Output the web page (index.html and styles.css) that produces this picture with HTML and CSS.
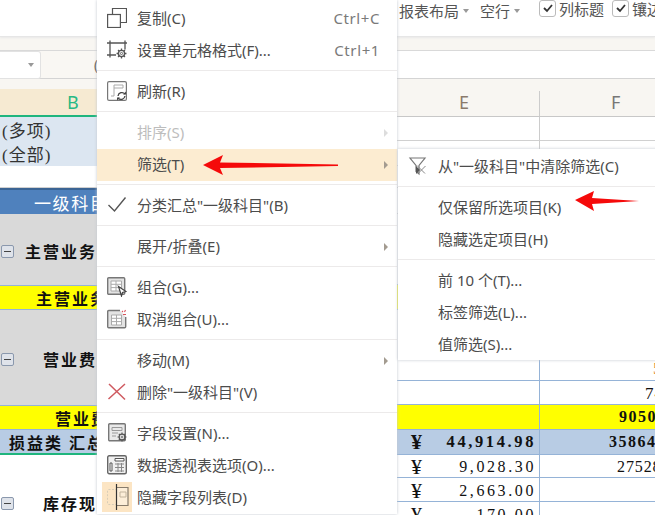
FILE: index.html
```html
<!DOCTYPE html>
<html lang="zh">
<head>
<meta charset="utf-8">
<title>数据透视表</title>
<link rel="stylesheet" href="styles.css">
</head>
<body>
<svg class="defs" width="0" height="0">
  <symbol id="gear" viewBox="0 0 12 12">
    <circle cx="6" cy="6" r="3.4" fill="#fff" stroke="#555" stroke-width="1.5"/>
    <circle cx="6" cy="6" r="1.2" fill="none" stroke="#555"/>
    <path d="M6 .6v2M6 9.400v2M.6 6h2M9.400 6h2M2.200 2.200l1.400 1.400M8.400 8.400l1.400 1.400M2.200 9.800l1.400-1.400M8.400 3.600l1.400-1.400" stroke="#555" stroke-width="1.400"/>
  </symbol>
</svg>
<div class="page">
  <header class="ribbon">
    <span class="tool">报表布局<i class="caret"></i></span>
    <span class="tool">空行<i class="caret"></i></span>
    <span class="ribbon-sep"></span>
    <label class="check"><i class="box"><svg width="12" height="12" viewBox="0 0 12 12"><path d="M2 6l3 3 5-6" fill="none" stroke="#333" stroke-width="1.800"/></svg></i>列标题</label>
    <label class="check"><i class="box"><svg width="12" height="12" viewBox="0 0 12 12"><path d="M2 6l3 3 5-6" fill="none" stroke="#333" stroke-width="1.800"/></svg></i>镶边行</label>
  </header>
  <div class="strip"></div>
  <div class="formula">
    <div class="formula-left"><div class="namebox"><i class="caret"></i></div><span class="paren">(</span></div>
    <div class="formula-input"></div>
  </div>
  <div class="colhead">
    <div class="colhead-left"><span class="col-b">B</span></div>
    <div class="col-e">E</div>
    <div class="col-f">F</div>
  </div>
  <div class="sheet">
    <div class="row h24 filter"><div class="cell a">(多项)</div><div class="cell e"></div><div class="cell f"></div></div>
    <div class="row h25 filter"><div class="cell a">(全部)</div><div class="cell e"></div><div class="cell f"></div></div>
    <div class="row h22"><div class="cell a"></div><div class="cell e"></div><div class="cell f"></div></div>
    <div class="row h26 head"><div class="cell a ind34">一级科目</div><div class="cell e"></div><div class="cell f"></div></div>
    <div class="row h71 grey"><div class="cell a"><i class="minus"></i><span class="name ind11">主营业务收入</span></div><div class="cell e"></div><div class="cell f"></div></div>
    <div class="row h25 yellow"><div class="cell a ind36">主营业务收入 汇总</div><div class="cell e"></div><div class="cell f"></div></div>
    <div class="row h95 grey">
      <div class="cell a"><i class="minus"></i><span class="name ind29">营业费用</span></div>
      <div class="split"><div class="part upper"></div><div class="part"></div></div>
      <div class="split fcol"><div class="part upper"><span class="five">5</span></div><div class="part"><span class="seven">74</span></div></div>
    </div>
    <div class="row h25 yellow"><div class="cell a ind55">营业费用 汇总</div><div class="cell e"></div><div class="cell f"><b class="over ov80">90502</b></div></div>
    <div class="row h25 total"><div class="cell a ind9">损益类 汇总</div><div class="cell e money"><span class="yen">¥</span><b>44,914.98</b></div><div class="cell f"><b class="over ov70">358640</b></div></div>
    <div class="row h23 plain"><div class="cell a"></div><div class="cell e money"><span class="yen">¥</span><span>9,028.30</span></div><div class="cell f"><span class="over ov78">275280</span></div></div>
    <div class="row h24 plain"><div class="cell a"></div><div class="cell e money"><span class="yen">¥</span><span>2,663.00</span></div><div class="cell f"></div></div>
    <div class="row h24 plain late"><div class="cell a"><i class="minus"></i><span class="name ind29">库存现金</span></div><div class="cell e money"><span class="yen">¥</span><span>170.00</span></div><div class="cell f"></div></div>
  </div>

  <nav class="menu main">
    <div class="item"><svg class="ic" viewBox="0 0 20 20"><path d="M5.500 6.500V.5h14v14h-6" fill="none" stroke="#555" stroke-width="1.200"/><rect x=".6" y="6.500" width="12.800" height="13" fill="none" stroke="#555" stroke-width="1.200"/></svg><span>复制(C)</span><em class="key">Ctrl+C</em></div>
    <div class="item"><svg class="ic" viewBox="0 0 20 20"><path d="M3 .5v17M18 .5v9M0 3h20M0 15h9" fill="none" stroke="#555" stroke-width="1.300"/><use href="#gear" x="9" y="8" width="11" height="11"/></svg><span>设置单元格格式(F)...</span><em class="key">Ctrl+1</em></div>
    <div class="sep"></div>
    <div class="item"><svg class="ic" viewBox="0 0 20 20"><rect x=".6" y=".6" width="18.800" height="18.800" rx="1.500" fill="#fff" stroke="#777" stroke-width="1.200"/><path d="M7 4h9v3H7zM7 7v8H4" fill="none" stroke="#aaa"/><path d="M11 15a4 4 0 0 1 7-2M18 15a4 4 0 0 1-7 2" fill="none" stroke="#444" stroke-width="1.300"/><path d="M19 10.500v3h-3zM10 19.500v-3h3z" fill="#444"/></svg><span>刷新(R)</span></div>
    <div class="sep"></div>
    <div class="item off"><i class="ic"></i><span>排序(S)</span><i class="tri"></i></div>
    <div class="item active"><i class="ic"></i><span>筛选(T)</span><i class="tri"></i></div>
    <div class="sep"></div>
    <div class="item"><svg class="ic" viewBox="0 0 20 20"><path d="M1.500 10l6 6L18.500 2.500" fill="none" stroke="#555" stroke-width="1.400"/></svg><span>分类汇总"一级科目"(B)</span></div>
    <div class="sep"></div>
    <div class="item"><i class="ic"></i><span>展开/折叠(E)</span><i class="tri"></i></div>
    <div class="sep"></div>
    <div class="item"><svg class="ic" viewBox="0 0 20 20"><rect x=".7" y=".7" width="17" height="16.600" rx="1" fill="#e3e3e3" stroke="#777" stroke-width="1.400"/><path d="M4 4h10.500v10H4zM4 7.300h10.500M4 10.600h10.500M9 4v10" fill="#fff" stroke="#aaa"/><path d="M11.500 9.500l7.500 5-3.500 1-1 3.500z" fill="#fff" stroke="#444" stroke-width="1.200"/></svg><span>组合(G)...</span></div>
    <div class="item"><svg class="ic" viewBox="0 0 20 20"><path d="M13 1.500H1.700a1 1 0 0 0-1 1v15.300a1 1 0 0 0 1 1h16a1 1 0 0 0 1-1V8" fill="#e3e3e3" stroke="#777" stroke-width="1.400"/><path d="M4.500 6h10v10h-10zM4.500 9.300h10M4.500 12.600h10M9.500 6v10" fill="#fff" stroke="#aaa"/><path d="M15 2l1 1M18.500 1l-1 2M16 5.500h3" stroke="#d9535b" stroke-width="1.100" fill="none"/></svg><span>取消组合(U)...</span></div>
    <div class="sep"></div>
    <div class="item"><i class="ic"></i><span>移动(M)</span><i class="tri"></i></div>
    <div class="item"><svg class="ic" viewBox="0 0 20 20"><path d="M2 2l16 15.500M18 2L1.500 17" fill="none" stroke="#cf5a60" stroke-width="1.500"/></svg><span>删除"一级科目"(V)</span></div>
    <div class="sep"></div>
    <div class="item"><svg class="ic" viewBox="0 0 20 20"><rect x="1.700" y=".8" width="16.600" height="17" rx="1" fill="#e9e9e9" stroke="#777" stroke-width="1.400"/><path d="M5 4.500h10v3H5zM5 10h6M5 13h4" fill="none" stroke="#999"/><use href="#gear" x="10" y="9" width="10" height="10"/></svg><span>字段设置(N)...</span></div>
    <div class="item"><svg class="ic" viewBox="0 0 20 20"><rect x=".7" y=".7" width="18.600" height="18" rx="1.500" fill="#f0f0f0" stroke="#666" stroke-width="1.400"/><path d="M8 3.500h9v2.500H8zM3 8h2v8H3z" fill="#fff" stroke="#555"/><path d="M8 9h9M8 12.500h9M8 16h9M11 8v9M14.500 8v9" stroke="#888" fill="none"/></svg><span>数据透视表选项(O)...</span></div>
    <div class="item"><svg class="ic hidefield" viewBox="0 0 30 30"><rect width="30" height="30" fill="#fce5c4"/><rect x="5.500" y="7.500" width="9" height="15" rx="1" fill="none" stroke="#d8cdb8" stroke-dasharray="2 1.500"/><path d="M14 5.500h12v18H14" fill="#fdeed8" stroke="#887c6c" stroke-width="1.200"/><path d="M18 10h6v5h-6z" fill="none" stroke="#c3b49d"/><path d="M14.500 2v26" stroke="#333" stroke-width="1.200"/></svg><span>隐藏字段列表(D)</span></div>
  </nav>

  <nav class="menu sub">
    <div class="item"><svg class="ic" viewBox="0 0 20 20"><path d="M2 2h15L11 9.500V18L8 15.500V9.500z" fill="none" stroke="#777" stroke-width="1.200"/><path d="M9 9.500l8 8M17.500 10l-7 7" fill="none" stroke="#888"/><path d="M8 10l4 4-4 4z" fill="#555"/></svg><span>从"一级科目"中清除筛选(C)</span></div>
    <div class="sep"></div>
    <div class="item"><i class="ic"></i><span>仅保留所选项目(K)</span></div>
    <div class="item"><i class="ic"></i><span>隐藏选定项目(H)</span></div>
    <div class="sep"></div>
    <div class="item"><i class="ic"></i><span>前 10 个(T)...</span></div>
    <div class="item"><i class="ic"></i><span>标签筛选(L)...</span></div>
    <div class="item"><i class="ic"></i><span>值筛选(S)...</span></div>
  </nav>

  <svg class="arrow first" width="136" height="22" viewBox="0 0 136 22"><path d="M0 11L20 1l-3 7.500L135 10.500v1.500L17 14l3 7z" fill="#f50a0a"/></svg>
  <svg class="arrow second" width="66" height="22" viewBox="0 0 66 22"><path d="M0 10L19 1l-2 7 47 3-47 3 2 7z" fill="#f50a0a"/></svg>
</div>
</body>
</html>
```

FILE: styles.css
```css
* { box-sizing: border-box; }
html, body { margin: 0; padding: 0; background: #fff; }
body { font-family: "Noto Sans", "Noto Sans CJK SC", sans-serif; font-size: 15px; color: #4c4c4c; }
.defs { position: absolute; }
i, em { font-style: normal; }
.page { position: relative; width: 655px; height: 515px; overflow: hidden; }

.ribbon { height: 37px; padding-left: 399px; display: flex; align-items: flex-start; background: #fff; border-bottom: 1px solid #e6e6e6; box-shadow: 0 1px 2px #e8e8e8; font-size: 15px; color: #555; line-height: 22px; white-space: nowrap; position: relative; }
.tool { display: flex; align-items: center; margin-right: 11px; }
.tool .caret { margin-left: 4px; }
.caret { display: inline-block; width: 0; height: 0; border: 3px solid transparent; border-top: 4px solid #999; border-bottom: 0; }
.ribbon-sep { width: 1px; height: 33px; background: #e8e8e8; margin: 0 9px 0 -1px; }
.check { display: flex; align-items: center; margin: -2px 8px 0 0; }
.box { display: flex; align-items: center; justify-content: center; width: 17px; height: 17px; margin: -2px 3px 0 0; border: 1px solid #bbb; border-radius: 3px; background: #fff; }

.strip { height: 14px; background: #f8f6f2; border-bottom: 1px solid #d9d9d9; }
.formula { height: 28px; display: flex; border-bottom: 1px solid #d4d4d4; }
.formula-left { width: 397px; display: flex; align-items: center; background: #f9f7f3; }
.namebox { width: 41px; height: 28px; background: #fff; border: 1px solid #e2e2e2; border-left: 0; border-radius: 0 3px 3px 0; display: flex; align-items: center; justify-content: flex-end; padding-right: 6px; }
.paren { margin-left: 53px; font-size: 14px; color: #555; }
.formula-input { flex: 1; background: #fff; }

.colhead { height: 38px; display: grid; grid-template-columns: 397px 142px 116px; background: #f8f6f2; font-size: 18px; color: #777; }
.colhead-left { padding-top: 10px; }
.col-b { display: block; height: 28px; background: #f6ead2; border-bottom: 2px solid #1fb57d; color: #28b985; line-height: 27px; padding-left: 67px; }
.col-e, .col-f { border-bottom: 1px solid #c8c8c8; line-height: 15px; padding-top: 16px; }
.col-e { padding-left: 62px; color: #8a7a6c; }
.col-f { padding-left: 72px; color: #777; border-left: 0; position: relative; }
.col-f::before { content: ""; position: absolute; left: 0; top: 12px; bottom: 0; border-left: 1px solid #ccc; }

.sheet { font-family: "Liberation Serif", "Noto Sans CJK SC", serif; color: #111; }
.row { display: grid; grid-template-columns: 397px 142px 116px; white-space: nowrap; overflow: hidden; }
.h22 { height: 22px; } .h23 { height: 23px; } .h24 { height: 24px; } .h25 { height: 25px; } .h26 { height: 26px; } .h71 { height: 71px; } .h95 { height: 95px; }
.cell { display: flex; align-items: center; overflow: hidden; border-bottom: 1px solid #d0d0d0; }
.cell.f { border-left: 1px solid #ccc; }
.a { font-size: 16px; font-weight: 700; letter-spacing: 2px; }
.filter .a { background: #dce6f1; border-bottom: 0; font-weight: 400; color: #333; letter-spacing: 1px; font-size: 17px; padding-left: 2px; }
.head .a { background: #4f81bd; color: #fff; border-top: 2px solid #3b6494; border-bottom: 0; font-weight: 400; font-size: 17px; letter-spacing: 1.600px; }
.grey .a { background: #d9d9d9; border-bottom: 0; padding-top: 3px; }
.grey .e, .grey .f, .yellow .cell, .total .cell, .plain .cell { border-color: #95b3d7; }
.yellow .cell { background: #ff0; border-bottom: 1px solid #95b3d7; }
.yellow .a { border-top: 1px solid #95b3d7; }
.total .cell { background: #b8cce4; font-weight: 700; }
.total .a { border-bottom: 2px solid #1fb57d; }
.plain .a { border: 0; }
.plain .e, .plain .f { font-size: 16px; padding-top: 2px; }
.ind9 { padding-left: 9px; } .ind34 { padding-left: 34px; } .ind36 { padding-left: 36px; } .ind55 { padding-left: 55px; }
.name.ind11 { margin-left: 11px; } .name.ind29 { margin-left: 29px; }
.minus { flex: none; position: relative; width: 13px; height: 13px; margin-left: 1px; border: 1px solid #8a98ad; border-radius: 2px; background: #dfe3ea; }
.minus::after { content: ""; position: absolute; left: 2px; right: 2px; top: 5px; height: 1px; background: #444; }

.split { border-bottom: 1px solid #95b3d7; background: #fff; overflow: hidden; }
.split.fcol { border-left: 1px solid #95b3d7; font-size: 17px; }
.part { height: 23px; padding-top: 3px; display: flex; align-items: center; }
.part.upper { height: 71px; padding-top: 0; border-bottom: 1px solid #95b3d7; align-items: flex-end; }
.five { margin-left: 113px; line-height: 22px; color: #e08a2e; }
.seven { margin-left: 105px; letter-spacing: 1px; }

.money { justify-content: space-between; padding: 0 3px 0 14px; font-size: 16.500px; }
.money b, .money span:last-child { letter-spacing: 2.600px; }
.money .yen { font-size: 22px; font-family: "Liberation Serif", serif; letter-spacing: 0; }
.f { font-size: 16px; }
.over { margin-left: 78px; letter-spacing: 1.500px; }
.ov80 { margin-left: 79px; } .ov70 { margin-left: 69px; } .ov78 { margin-left: 77px; letter-spacing: .9px; }

.late { overflow: visible; grid-template-rows: 24px; }
.late .a { overflow: visible; height: 46px; margin-top: -22px; }

.menu { position: absolute; background: #fff; box-shadow: 0 0 3px #c3c8d0; font-size: 15px; color: #4c4c4c; white-space: nowrap; }
.main { left: 97px; top: 0; width: 300px; height: 514px; padding-top: 3px; }
.sub { left: 398px; top: 149px; width: 260px; height: 211px; padding-top: 2px; }
.item { height: 32px; padding-bottom: 2px; display: flex; align-items: center; position: relative; }
.item > span { margin-bottom: 2px; }
.ic { flex: none; display: block; width: 20px; height: 20px; margin: 0 10px; }
.hidefield { width: 30px; height: 30px; margin: 0 5px; }
.item.active { background: #fcecd1; }
.item.off { color: #bdbdbd; }
.sep { height: 1px; margin: 3px 0 5px; background: #eceaea; }
.key { position: absolute; right: 17px; top: 4px; color: #7a7a7a; font-size: 15px; letter-spacing: .6px; line-height: 22px; }
.tri { position: absolute; right: 9px; top: 12px; width: 0; height: 0; border: 4px solid transparent; border-left: 4px solid #a39b90; border-right: 0; }
.off .tri { border-left-color: #ddd; }

.arrow { position: absolute; display: block; }
.first { left: 203px; top: 154px; }
.second { left: 575px; top: 190px; }
```
